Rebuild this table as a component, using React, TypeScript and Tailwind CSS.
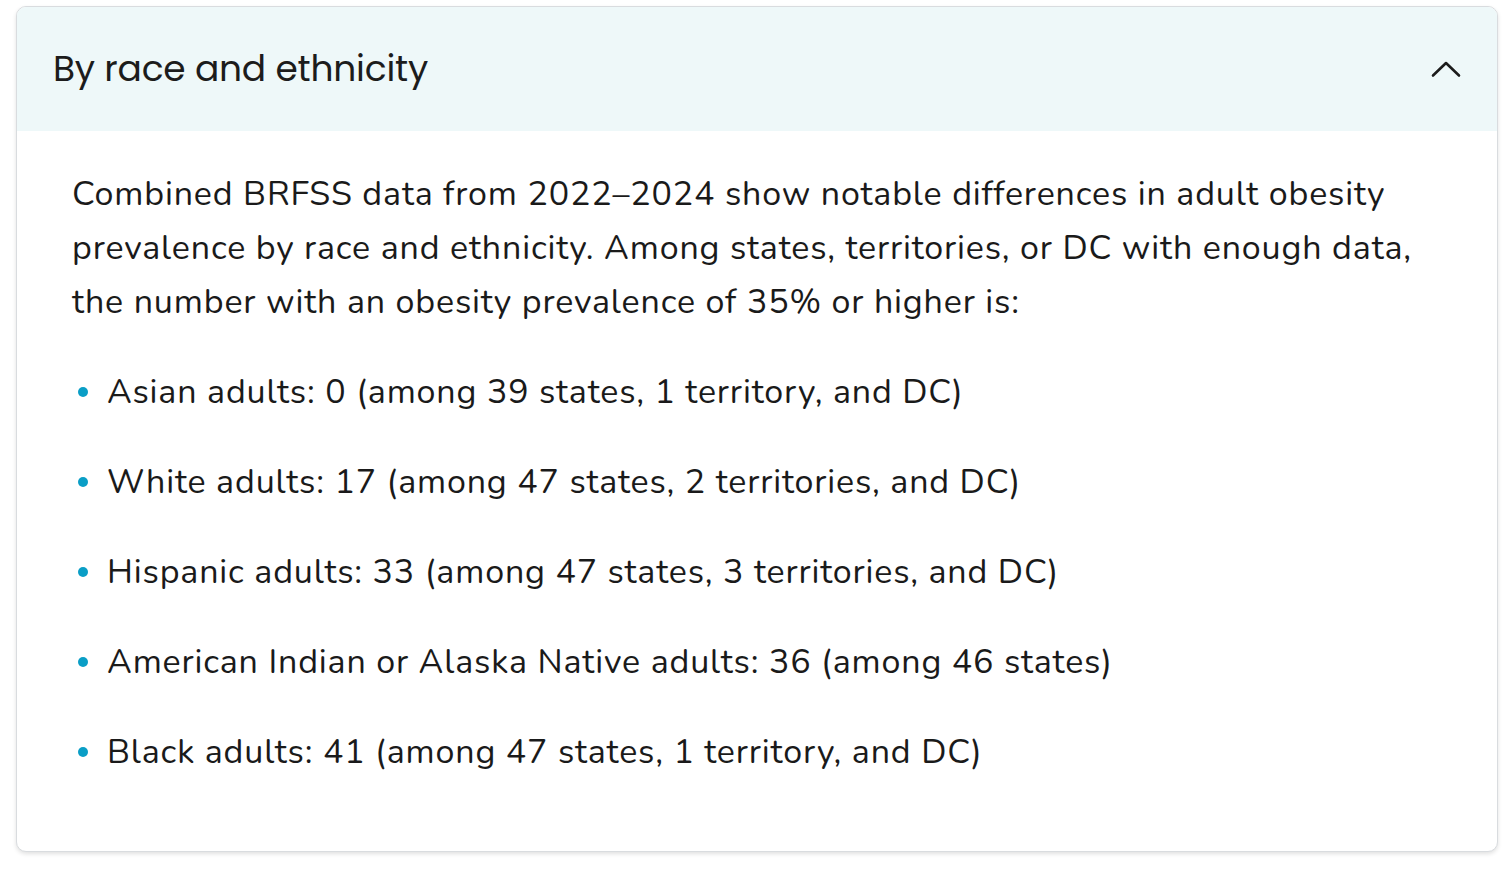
import { useState } from "react";

const items = [
	"Asian adults: 0 (among 39 states, 1 territory, and DC)",
	"White adults: 17 (among 47 states, 2 territories, and DC)",
	"Hispanic adults: 33 (among 47 states, 3 territories, and DC)",
	"American Indian or Alaska Native adults: 36 (among 46 states)",
	"Black adults: 41 (among 47 states, 1 territory, and DC)",
];

function ChevronUp() {
	return (
		<svg width="30" height="18" viewBox="0 0 30 18" fill="none" aria-hidden="true">
			<polyline
				points="2,15.5 15,3 28,15.5"
				stroke="#1c1c1c"
				strokeWidth="2.6"
				strokeLinecap="round"
				strokeLinejoin="round"
			/>
		</svg>
	);
}

export default function App() {
	const [open, setOpen] = useState(true);

	return (
		<div className="min-h-screen bg-white pt-[6px] pl-[16px] pr-[8px]">
			<div className="w-[1482px] overflow-hidden rounded-[10px] border border-[#d9dcdf] bg-white shadow-[0_2px_4px_rgba(0,0,0,0.12)]">
				<button
					type="button"
					onClick={() => setOpen(!open)}
					className="flex h-[124px] w-full items-center justify-between bg-[#eef8f9] pl-[36px] pr-[36px] text-left"
				>
					<span className="font-['Poppins','Open_Sans',sans-serif] text-[36px] font-normal leading-none tracking-[-0.2px] text-[#1c1c1c]">
						By race and ethnicity
					</span>
					<ChevronUp />
				</button>
				{open && (
					<div className="px-[55px] pt-[36px] pb-[72px] font-['Nunito','Lato',sans-serif] text-[34px] leading-[54px] tracking-[0.85px] text-[#1a1a1a]">
						<p>
							Combined BRFSS data from 2022–2024 show notable differences in adult
							obesity prevalence by race and ethnicity. Among states, territories,
							or DC with enough data, the number with an obesity prevalence of 35%
							or higher is:
						</p>
						<ul className="mt-[36px] flex flex-col gap-[36px]">
							{items.map((t) => (
								<li key={t} className="flex items-center">
									<span className="ml-[6px] mr-[19px] h-[10px] w-[10px] shrink-0 rounded-full bg-[#0a9ec6]" />
									<span>{t}</span>
								</li>
							))}
						</ul>
					</div>
				)}
			</div>
		</div>
	);
}
